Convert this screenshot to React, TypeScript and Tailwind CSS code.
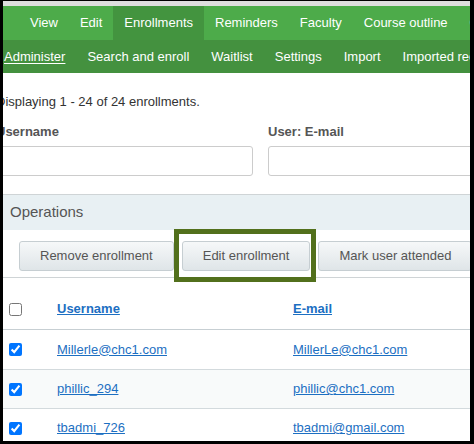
import React from 'react';

const topTabs = ['View', 'Edit', 'Enrollments', 'Reminders', 'Faculty', 'Course outline', 'Course'];
const subTabs = ['Administer', 'Search and enroll', 'Waitlist', 'Settings', 'Import', 'Imported records'];

const rows = [
  { user: 'Millerle@chc1.com', email: 'MillerLe@chc1.com' },
  { user: 'phillic_294', email: 'phillic@chc1.com' },
  { user: 'tbadmi_726', email: 'tbadmi@gmail.com' },
];

const App: React.FC = () => {
  return (
    <div
      className="w-[474px] h-[444px] bg-black pt-[1px] pl-[3px] overflow-hidden"
      style={{ fontFamily: '"Liberation Sans", Arial, sans-serif' }}
    >
      <div className="relative w-[467px] h-[440px] bg-white overflow-hidden">
        <div className="h-[5px] bg-[#dedede]" />

        {/* Top nav */}
        <div className="h-[34px] bg-[#4dab4a] flex pl-[16px] whitespace-nowrap">
          {topTabs.map(t => (
            <div
              key={t}
              className={`px-[11px] flex items-center text-[13px] text-white ${t === 'Enrollments' ? 'bg-[#43943f]' : ''}`}
            >
              {t}
            </div>
          ))}
        </div>

        {/* Sub nav */}
        <div className="h-[33px] bg-[#44913f] flex ml-[-10px] whitespace-nowrap">
          {subTabs.map(t => (
            <div key={t} className="px-[11px] flex items-center text-[13px] text-white">
              <span className={t === 'Administer' ? 'underline underline-offset-2' : ''}>{t}</span>
            </div>
          ))}
        </div>

        {/* Filters */}
        <div className="ml-[-7px] w-[560px]">
          <div className="mt-[20px] h-[18px] leading-[18px] text-[13px] text-[#333]">
            Displaying 1 - 24 of 24 enrollments.
          </div>
          <div className="flex gap-[15px] mt-[12px]">
            <div className="w-[257px]">
              <div className="h-[18px] leading-[18px] text-[13px] font-bold text-[#555]">Username</div>
              <div className="mt-[5px] h-[30px] border border-[#ccc] rounded-[3px] bg-white" />
            </div>
            <div className="w-[257px]">
              <div className="h-[18px] leading-[18px] text-[13px] font-bold text-[#555]">User: E-mail</div>
              <div className="mt-[5px] h-[30px] border border-[#ccc] rounded-[3px] bg-white" />
            </div>
          </div>
        </div>

        {/* Operations */}
        <div className="mt-[18px] border-t border-[#cfd4d6]">
          <div className="h-[35px] bg-[#e8f0f3] flex items-center pl-[7px] text-[15px] text-[#555]">
            Operations
          </div>
          <div className="flex gap-[8px] pl-[16px] pt-[11px] pb-[6px] border-b border-[#cfd4d6] whitespace-nowrap">
            {['Remove enrollment', 'Edit enrollment', 'Mark user attended'].map(b => (
              <div
                key={b}
                className="h-[30px] px-[20px] flex items-center text-[13px] text-[#555] border border-[#c6ced2] rounded-[3px] bg-linear-to-b from-[#f6f8f9] to-[#dfe5e8]"
              >
                {b}
              </div>
            ))}
          </div>
        </div>

        {/* Table */}
        <div className="h-[52px] pt-[11px] border-b border-[#c7cfd3] flex items-start">
          <div className="w-[54px] h-[40px] flex items-center pl-[6px]">
            <input type="checkbox" readOnly className="w-[13px] h-[13px]" />
          </div>
          <div className="w-[236px] h-[40px] flex items-center text-[13px] font-bold text-[#1c6fc2] underline">Username</div>
          <div className="h-[40px] flex items-center text-[13px] font-bold text-[#1c6fc2] underline">E-mail</div>
        </div>
        {rows.map((r, i) => (
          <div
            key={r.user}
            className={`flex items-center border-b border-[#d3dadd] ${i === 0 ? 'h-[40px]' : 'h-[39px]'} ${i === 1 ? 'bg-[#f8fafa]' : 'bg-white'}`}
          >
            <div className="w-[54px] flex items-center pl-[6px]">
              <input type="checkbox" checked readOnly className="w-[13px] h-[13px]" />
            </div>
            <div className="w-[236px] text-[13px] text-[#1c6fc2] underline">{r.user}</div>
            <div className="text-[13px] text-[#1c6fc2] underline">{r.email}</div>
          </div>
        ))}

        {/* Highlight overlay */}
        <div className="absolute left-[171px] top-[228px] w-[142px] h-[53px] border-[5px] border-[#52701c]" />
      </div>
    </div>
  );
};

export default App;
